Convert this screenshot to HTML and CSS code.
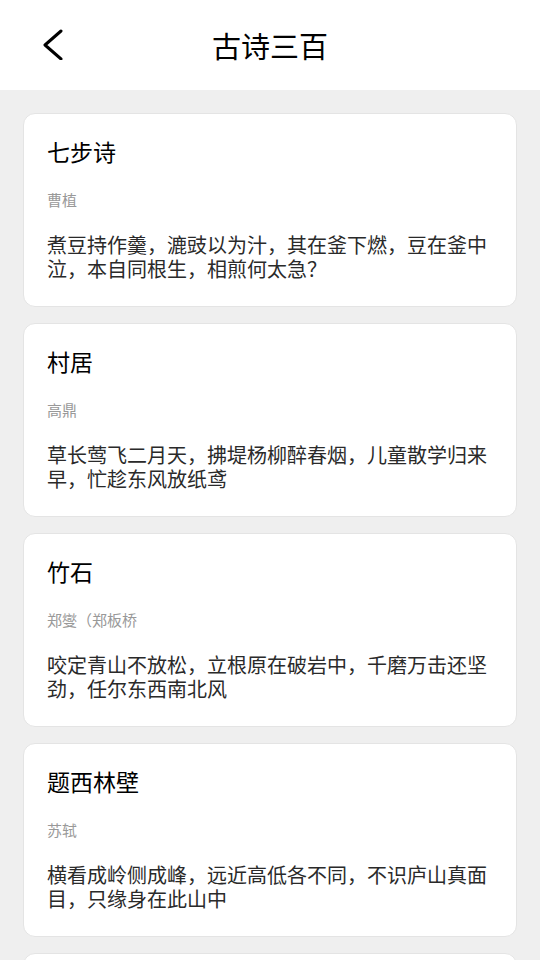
FILE: index.html
```html
<!DOCTYPE html>
<html lang="zh-CN">
<head>
  <meta charset="UTF-8" />
  <meta name="viewport" content="width=device-width, initial-scale=1.0"/>
  <title>古诗三百</title>
  <link rel="stylesheet" href="styles.css">
</head>
<body>
  <header class="top-bar">
    <button class="back" aria-label="返回">
      <svg width="24" height="32" viewBox="0 0 24 32">
        <path d="M20 3 L4 17 L20 31" fill="none" stroke="#000" stroke-width="3" stroke-linecap="round" stroke-linejoin="round"/>
      </svg>
    </button>
    <h1 class="title">古诗三百</h1>
  </header>

  <main class="list">
    <div class="poem">
      <h2 class="poem-title">七步诗</h2>
      <p class="poem-author">曹植</p>
      <p class="poem-text">煮豆持作羹，漉豉以为汁，其在釜下燃，豆在釜中泣，本自同根生，相煎何太急？</p>
    </div>

    <div class="poem">
      <h2 class="poem-title">村居</h2>
      <p class="poem-author">高鼎</p>
      <p class="poem-text">草长莺飞二月天，拂堤杨柳醉春烟，儿童散学归来早，忙趁东风放纸鸢</p>
    </div>

    <div class="poem">
      <h2 class="poem-title">竹石</h2>
      <p class="poem-author">郑燮（郑板桥</p>
      <p class="poem-text">咬定青山不放松，立根原在破岩中，千磨万击还坚劲，任尔东西南北风</p>
    </div>

    <div class="poem">
      <h2 class="poem-title">题西林壁</h2>
      <p class="poem-author">苏轼</p>
      <p class="poem-text">横看成岭侧成峰，远近高低各不同，不识庐山真面目，只缘身在此山中</p>
    </div>

    <!-- next card, only its top edge shows -->
    <div class="poem"></div>
  </main>
</body>
</html>
```

FILE: styles.css
```css
* {
  box-sizing: border-box;
}

body {
  margin: 0;
  font-family: "Noto Sans CJK SC", "Noto Sans", sans-serif;
  background: #efefef;
  height: 960px;
  overflow: hidden;
}

.top-bar {
  height: 90px;
  background: #fff;
  display: flex;
  align-items: center;
  justify-content: center;
  position: relative;
}

.back {
  position: absolute;
  left: 41px;
  top: 28px;
  padding: 0;
  border: none;
  background: none;
  display: flex;
}

.title {
  margin: 0;
  font-size: 29px;
  font-weight: normal;
  color: #000;
  line-height: 1;
}

.list {
  padding: 23px 23px 0 23px;
  display: flex;
  flex-direction: column;
  gap: 16px;
}

.poem {
  background: #fff;
  border: 1px solid #e4e4e4;
  border-radius: 12px;
  padding: 20px 24px 24px 23px;
  height: 194px;
  flex-shrink: 0;
}

.poem-title {
  margin: 0;
  font-size: 23px;
  font-weight: normal;
  line-height: 34px;
  color: #000;
}

.poem-author {
  margin: 22px 0 0;
  font-size: 15px;
  line-height: 20px;
  color: #999;
}

.poem-text {
  margin: 23px 0 0;
  font-size: 20px;
  line-height: 24px;
  color: #2a2a2a;
}
```
